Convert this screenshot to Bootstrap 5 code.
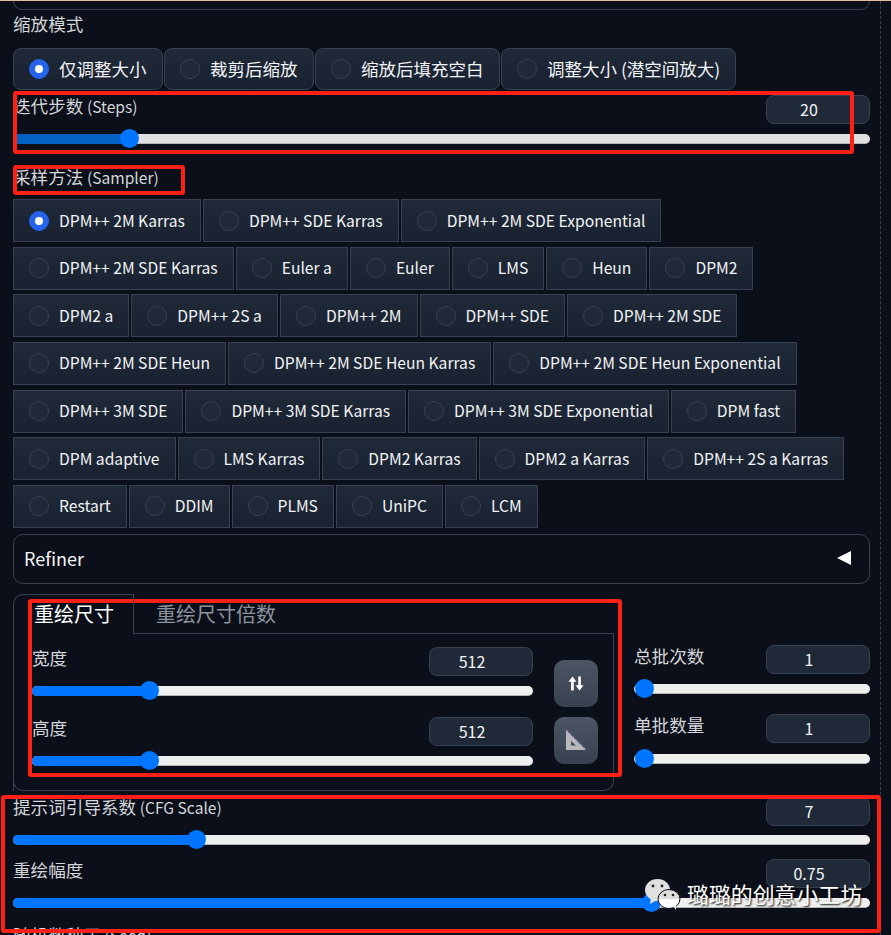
<!DOCTYPE html>
<html lang="zh"><head><meta charset="utf-8"><title>img2img</title>
<link href="https://cdn.jsdelivr.net/npm/bootstrap@5.3.0/dist/css/bootstrap.min.css" rel="stylesheet">
<style>
html,body{height:935px;overflow:hidden;background:#0b0f19}
body{position:relative;font-family:"Noto Sans CJK SC","Noto Sans",sans-serif;color:#d4d6da;font-size:16px;line-height:22px;border-top:1px solid #e6b9a0;padding:0 21px 0 13px}
.guide{position:absolute;top:0;bottom:0;left:880px;border-left:1px dashed #374151}
.topbox{height:9px;border:1px solid #374151;border-top:0;border-radius:0 0 10px 10px}
.lbl{color:#d4d6da;white-space:nowrap;font-size:15.6px}
.zh{font-size:17.6px}
.mode-head{margin-top:3px;height:22px}
.radio-row{display:flex;gap:2px}
.opt{display:flex;align-items:center;gap:10px;height:43px;padding:0 15px;background:linear-gradient(#1f2937,#1a2231);border:1px solid #374151;color:#f3f4f6;white-space:nowrap;font-size:15.65px}
.modes{margin-top:13px;gap:1.5px}
.modes .opt{border-radius:8px;font-size:17.5px;height:42px}
.dot{width:20px;height:20px;border-radius:50%;background:#1f2937;border:1px solid #374151;flex:none}
.dot.on{background:#2563eb;border-color:#2563eb;position:relative}
.dot.on::after{content:"";position:absolute;left:5px;top:5px;width:8px;height:8px;border-radius:50%;background:#fff}
.num{width:104px;height:29px;background:#1f2937;border:1px solid #374151;border-radius:8px;text-align:center;line-height:27px;color:#f3f4f6;flex:none;padding-right:18px;font-size:16px}
.track{position:relative;height:10px;background:#efefef;border-bottom:1px solid #b5b5b5;border-radius:5px}
.fill{position:absolute;left:0;top:0;bottom:-1px;background:#0075ff;border-radius:5px 0 0 5px}
.thumb{position:absolute;top:50%;width:19px;height:19px;margin:-9.5px 0 0 -9.5px;background:#0075ff;border-radius:50%}
.dim{background:#e1e1e1}.dim .fill{background:#0560c4;border-radius:0}
.steps{height:52px;padding-top:5px}
.steps .track{margin-top:10px}
.sampler-head{margin-top:24px}
.samplers{display:flex;flex-direction:column;gap:4.67px;margin-top:11px}
.refiner{margin-top:6px;height:50px;border:1px solid #374151;border-radius:10px;padding:0 10px 2px;color:#f3f4f6;font-size:18px}
.tri{width:0;height:0;border-style:solid;border-width:7px 14px 7px 0;border-color:transparent #fff transparent transparent;margin-right:8px}
.size-wrap{margin-top:10px;height:198px;gap:20px}
.tabs-box{width:601px;position:relative;flex:none}
.tab-outline{position:absolute;left:0;top:0;width:121px;height:197px;border:1px solid #374151;border-right:0;border-bottom:0;border-radius:10px 0 0 0}
.tabs-head{height:40px;padding-left:21px;font-size:20px;position:relative}
.tab-on{width:100px;color:#fff;line-height:40px;border-right:1px solid #374151;height:40px;flex:none;position:relative;z-index:1}
.tab-off{flex:1;color:#8d939d;border-bottom:1px solid #374151;line-height:40px;padding-left:22px}
.tabs-body{position:relative;height:157px;border:1px solid #374151;border-top:0;border-radius:0 0 10px 10px;padding:13px 15px 0 18px;gap:21px}
.size-col{flex:1;min-width:0}
.slider-head{height:29px}
.size-col .track{margin-top:10px}
.size-col .block2{margin-top:21px}
.tool{width:44px;height:47px;border-radius:10px;background:linear-gradient(#4b5563,#374151);border:0;padding:0;display:flex;align-items:center;justify-content:center}
.tools{gap:10px;padding-top:13px;flex:none;width:44px}
.batch{flex:1;min-width:0;padding-top:51px}
.batch .track{margin-top:10px}
.batch .second{margin-top:20px}
.batch .second + .track{margin-top:11px}
.cfg{margin-top:5px}
.cfg .track{margin-top:9px}
.cfg .second{margin-top:14px}
.cfg .second + .track{margin-top:10px}
.cfg-lbl{margin-top:-1px}
.seed{margin-top:16px}
.note{position:absolute;border:4px solid #ff2015;border-radius:3px;pointer-events:none}
.wm{position:absolute;left:645px;top:877px;display:flex;align-items:center;gap:6px;font-size:21.9px;line-height:32px;color:#fff;text-shadow:1px 1px 2px #000;white-space:nowrap}
</style></head>
<body>
<div class="guide"></div>
<div class="topbox"></div>
<div class="lbl mode-head"><span class="zh">缩放模式</span></div>
<div class="radio-row modes">
<div class="opt"><span class="dot on"></span>仅调整大小</div>
<div class="opt"><span class="dot"></span>裁剪后缩放</div>
<div class="opt"><span class="dot"></span>缩放后填充空白</div>
<div class="opt"><span class="dot"></span>调整大小 (潜空间放大)</div>
</div>
<div class="steps">
<div class="d-flex justify-content-between align-items-start slider-head"><span class="lbl"><span class="zh">迭代步数</span> (Steps)</span><span class="num">20</span></div>
<div class="track dim"><div class="fill" style="width:116px"></div><div class="thumb" style="left:116px"></div></div>
</div>
<div class="lbl sampler-head"><span class="zh">采样方法</span> (Sampler)</div>
<div class="samplers">
<div class="radio-row"><div class="opt"><span class="dot on"></span>DPM++ 2M Karras</div><div class="opt"><span class="dot"></span>DPM++ SDE Karras</div><div class="opt"><span class="dot"></span>DPM++ 2M SDE Exponential</div></div>
<div class="radio-row"><div class="opt"><span class="dot"></span>DPM++ 2M SDE Karras</div><div class="opt"><span class="dot"></span>Euler a</div><div class="opt"><span class="dot"></span>Euler</div><div class="opt"><span class="dot"></span>LMS</div><div class="opt"><span class="dot"></span>Heun</div><div class="opt"><span class="dot"></span>DPM2</div></div>
<div class="radio-row"><div class="opt"><span class="dot"></span>DPM2 a</div><div class="opt"><span class="dot"></span>DPM++ 2S a</div><div class="opt"><span class="dot"></span>DPM++ 2M</div><div class="opt"><span class="dot"></span>DPM++ SDE</div><div class="opt"><span class="dot"></span>DPM++ 2M SDE</div></div>
<div class="radio-row"><div class="opt"><span class="dot"></span>DPM++ 2M SDE Heun</div><div class="opt"><span class="dot"></span>DPM++ 2M SDE Heun Karras</div><div class="opt"><span class="dot"></span>DPM++ 2M SDE Heun Exponential</div></div>
<div class="radio-row"><div class="opt"><span class="dot"></span>DPM++ 3M SDE</div><div class="opt"><span class="dot"></span>DPM++ 3M SDE Karras</div><div class="opt"><span class="dot"></span>DPM++ 3M SDE Exponential</div><div class="opt"><span class="dot"></span>DPM fast</div></div>
<div class="radio-row"><div class="opt"><span class="dot"></span>DPM adaptive</div><div class="opt"><span class="dot"></span>LMS Karras</div><div class="opt"><span class="dot"></span>DPM2 Karras</div><div class="opt"><span class="dot"></span>DPM2 a Karras</div><div class="opt"><span class="dot"></span>DPM++ 2S a Karras</div></div>
<div class="radio-row"><div class="opt"><span class="dot"></span>Restart</div><div class="opt"><span class="dot"></span>DDIM</div><div class="opt"><span class="dot"></span>PLMS</div><div class="opt"><span class="dot"></span>UniPC</div><div class="opt"><span class="dot"></span>LCM</div></div>
</div>
<div class="refiner d-flex justify-content-between align-items-center"><span>Refiner</span><span class="tri"></span></div>
<div class="d-flex size-wrap">
<div class="tabs-box">
<div class="tab-outline"></div>
<div class="tabs-head d-flex"><div class="tab-on">重绘尺寸</div><div class="tab-off">重绘尺寸倍数</div></div>
<div class="tabs-body d-flex">
<div class="size-col">
<div class="d-flex justify-content-between slider-head"><span class="lbl zh">宽度</span><span class="num">512</span></div>
<div class="track"><div class="fill" style="width:117px"></div><div class="thumb" style="left:117px"></div></div>
<div class="d-flex justify-content-between slider-head block2"><span class="lbl zh">高度</span><span class="num">512</span></div>
<div class="track"><div class="fill" style="width:117px"></div><div class="thumb" style="left:117px"></div></div>
</div>
<div class="tools d-flex flex-column">
<button class="tool" type="button" aria-label="swap"><svg width="16" height="15" viewBox="0 0 18 16"><path d="M5 0 .5 6h3v10h3V6h3zM13 16l4.500-6h-3V0h-3v10h-3z" fill="#fff"/></svg></button>
<button class="tool" type="button" aria-label="ratio"><svg width="20" height="20" viewBox="0 0 20 20"><path fill-rule="evenodd" d="M0 0 20 20H0zM5 11v4.500h5z" fill="#b8b8bc"/><path d="M.5.5 19.500 19.500" stroke="#a48fc4" stroke-width="1.200" stroke-dasharray="2 2" fill="none"/></svg></button>
</div>
</div>
</div>
<div class="batch">
<div class="d-flex justify-content-between slider-head"><span class="lbl zh">总批次数</span><span class="num">1</span></div>
<div class="track"><div class="thumb" style="left:10px"></div></div>
<div class="d-flex justify-content-between slider-head second"><span class="lbl zh">单批数量</span><span class="num">1</span></div>
<div class="track"><div class="thumb" style="left:10px"></div></div>
</div>
</div>
<div class="cfg">
<div class="d-flex justify-content-between slider-head"><span class="lbl cfg-lbl"><span class="zh">提示词引导系数</span> (CFG Scale)</span><span class="num">7</span></div>
<div class="track"><div class="fill" style="width:183px"></div><div class="thumb" style="left:183px"></div></div>
<div class="d-flex justify-content-between slider-head second"><span class="lbl zh">重绘幅度</span><span class="num">0.75</span></div>
<div class="track"><div class="fill" style="width:638px"></div><div class="thumb" style="left:638px"></div></div>
<div class="lbl seed"><span class="zh">随机数种子</span> (Seed)</div>
</div>
<div class="note" style="left:13px;top:90px;width:841px;height:63px"></div>
<div class="note" style="left:13px;top:164px;width:172px;height:30px"></div>
<div class="note" style="left:28px;top:598px;width:594px;height:178px"></div>
<div class="note" style="left:1px;top:794px;width:880px;height:138px"></div>
<div class="wm"><svg width="36" height="32" viewBox="0 0 36 32"><defs><linearGradient id="halfg" x1="0" y1="0" x2="0" y2="1"><stop offset=".5" stop-color="#dcdcdc"/><stop offset=".5" stop-color="#fff"/></linearGradient></defs><ellipse cx="12.500" cy="12" rx="12.500" ry="11" fill="#e0e0e0"/><path d="M6 20l-1 6 7-4z" fill="#e0e0e0"/><ellipse cx="24" cy="21" rx="11" ry="9.500" fill="url(#halfg)" stroke="#0b0f19" stroke-width="1"/><path d="M29 29l2 3 0-5z" fill="#fff"/><circle cx="8" cy="8" r="1.400" fill="#222"/><circle cx="17" cy="8" r="1.400" fill="#222"/><circle cx="20" cy="17" r="1.300" fill="#222"/><circle cx="28" cy="17" r="1.300" fill="#222"/></svg><span>璐璐的创意小工坊</span></div>
<script src="https://cdn.jsdelivr.net/npm/bootstrap@5.3.0/dist/js/bootstrap.bundle.min.js"></script>
</body></html>
